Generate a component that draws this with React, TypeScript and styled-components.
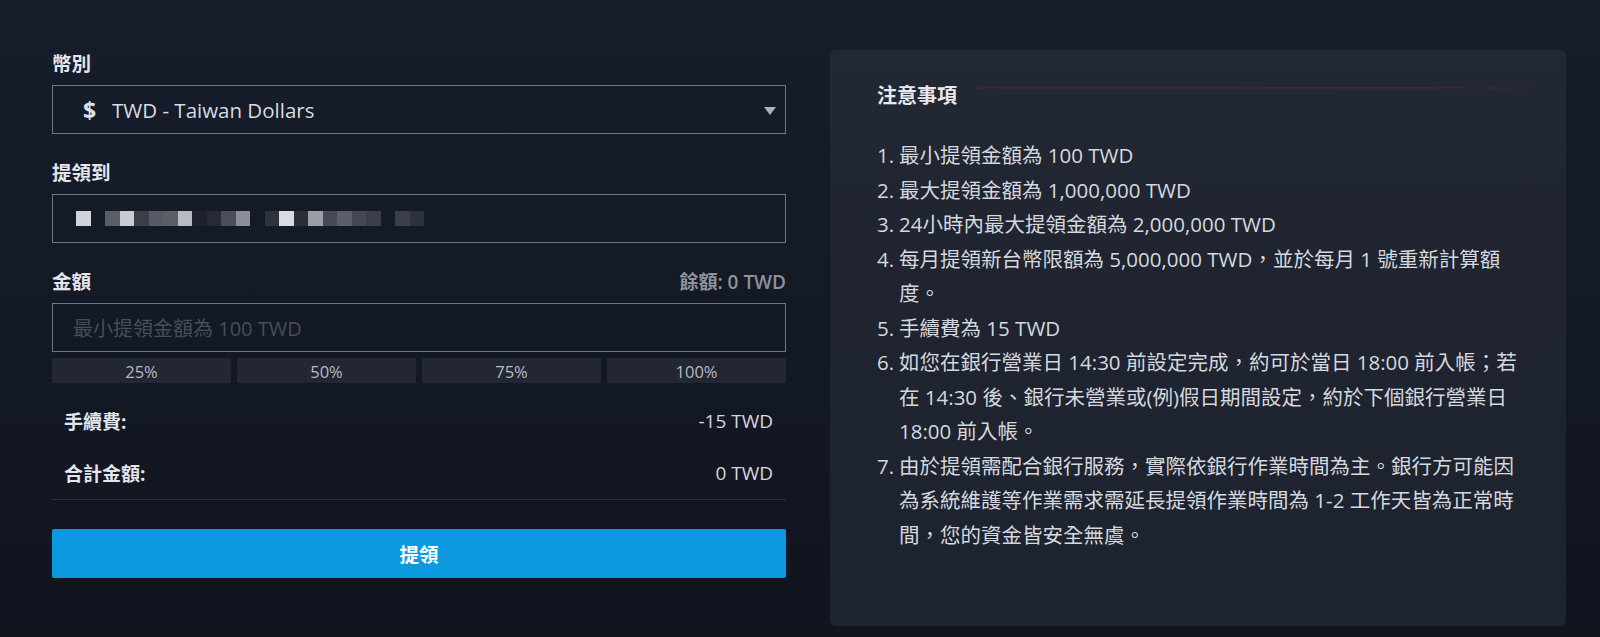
import React from "react";
import styled, { createGlobalStyle } from "styled-components";

const GlobalStyle = createGlobalStyle`
  html, body {
    margin: 0;
    padding: 0;
  }
  body {
    background: linear-gradient(180deg, #171d2a 0%, #131825 60%, #0f141d 100%);
    font-family: "Open Sans", "Noto Sans CJK TC", sans-serif;
    color: #d8dbe0;
  }
`;

const notes: string[][] = [
  ["最小提領金額為 100 TWD"],
  ["最大提領金額為 1,000,000 TWD"],
  ["24小時內最大提領金額為 2,000,000 TWD"],
  ["每月提領新台幣限額為 5,000,000 TWD，並於每月 1 號重新計算額", "度。"],
  ["手續費為 15 TWD"],
  [
    "如您在銀行營業日 14:30 前設定完成，約可於當日 18:00 前入帳；若",
    "在 14:30 後、銀行未營業或(例)假日期間設定，約於下個銀行營業日",
    "18:00 前入帳。",
  ],
  [
    "由於提領需配合銀行服務，實際依銀行作業時間為主。銀行方可能因",
    "為系統維護等作業需求需延長提領作業時間為 1-2 工作天皆為正常時",
    "間，您的資金皆安全無虞。",
  ],
];

// blurred account number, one shade per mosaic cell
const mosaic = [
  "#d0d3da", "", "#5a5e68", "#c8cbd2", "#3a3e48", "#555a64", "#5a5f68", "#b8bcc2",
  "#1e222c", "#262a34", "#4a4e58", "#8a8e96", "", "#2e323c", "#d8dbe0", "#2a2e38",
  "#9a9ea6", "#464a54", "#5a5e68", "#444852", "#3a3e48", "", "#3a3e48", "#2e323c",
];

const App = () => {
  return (
    <>
      <GlobalStyle />
      <Page>
        <Form>
          <Label>幣別</Label>
          <Field>
            <Dollar>$</Dollar>
            <SelectText>TWD - Taiwan Dollars</SelectText>
            <Caret />
          </Field>

          <Label>提領到</Label>
          <Field>
            <Mosaic>
              {mosaic.map((shade, i) => (
                <Cell key={i} $shade={shade} />
              ))}
            </Mosaic>
          </Field>

          <LabelRow>
            <Label>金額</Label>
            <Balance>餘額: 0 TWD</Balance>
          </LabelRow>
          <Field>
            <Placeholder>最小提領金額為 100 TWD</Placeholder>
          </Field>
          <Percents>
            {["25%", "50%", "75%", "100%"].map((p) => (
              <PercentButton key={p}>{p}</PercentButton>
            ))}
          </Percents>

          <Summary>
            <SummaryRow>
              <SummaryLabel>手續費:</SummaryLabel>
              <SummaryValue>-15 TWD</SummaryValue>
            </SummaryRow>
            <SummaryRow $last>
              <SummaryLabel>合計金額:</SummaryLabel>
              <SummaryValue>0 TWD</SummaryValue>
            </SummaryRow>
          </Summary>

          <Submit>提領</Submit>
        </Form>

        <Notice>
          <NoticeHead>
            <NoticeTitle>注意事項</NoticeTitle>
            <HeadLine />
          </NoticeHead>
          <NoteList>
            {notes.map((lines, i) => (
              <NoteItem key={i}>
                <NoteNum>{i + 1}.</NoteNum>
                <NoteText>
                  {lines.map((line) => (
                    <NoteLine key={line}>{line}</NoteLine>
                  ))}
                </NoteText>
              </NoteItem>
            ))}
          </NoteList>
        </Notice>
      </Page>
    </>
  );
};

const Page = styled.div`
  display: grid;
  grid-template-columns: 734px 736px;
  column-gap: 44px;
  align-items: start;
  padding: 50px 34px 11px 52px;
  height: 637px;
  box-sizing: border-box;
`;

const Form = styled.div`
  display: flex;
  flex-direction: column;
`;

const Label = styled.div`
  font-size: 19.5px;
  font-weight: 700;
  line-height: 28px;
  color: #e4e6ea;
  margin-bottom: 7px;
`;

const LabelRow = styled.div`
  display: flex;
  justify-content: space-between;
  align-items: flex-start;
  margin-top: 25px;
`;

const Balance = styled.div`
  font-size: 19px;
  font-weight: 600;
  line-height: 28px;
  color: #8d929b;
`;

const Field = styled.div`
  display: flex;
  align-items: center;
  height: 49px;
  box-sizing: border-box;
  border: 1px solid #6f7581;
  padding: 0 9px 0 22px;

  & + ${Label} {
    margin-top: 25px;
  }
`;

const Dollar = styled.span`
  font-family: "Open Sans", sans-serif;
  font-size: 23px;
  font-weight: 700;
  color: #dfe2e7;
  width: 37px;
  padding-left: 8px;
  box-sizing: border-box;
`;

const SelectText = styled.span`
  flex: 1;
  font-size: 20.5px;
  color: #d8dbe0;
`;

const Caret = styled.span`
  width: 0;
  height: 0;
  border-left: 6px solid transparent;
  border-right: 6px solid transparent;
  border-top: 8px solid #aeb3bc;
  margin-top: 2px;
`;

const Mosaic = styled.div`
  display: flex;
  margin-left: 1px;
`;

const Cell = styled.span<{ $shade: string }>`
  width: 14.5px;
  height: 15px;
  background: ${(p) => p.$shade || "transparent"};
`;

const Placeholder = styled.span`
  font-size: 20px;
  color: #474d59;
  margin-left: -2px;
`;

const Percents = styled.div`
  display: grid;
  grid-template-columns: repeat(4, 1fr);
  gap: 6px;
  margin-top: 6px;
`;

const PercentButton = styled.div`
  height: 25px;
  background: #222733;
  color: #b6bac2;
  font-size: 16.5px;
  line-height: 27px;
  text-align: center;
`;

const Summary = styled.div`
  display: flex;
  flex-direction: column;
  margin-top: 12px;
`;

const SummaryRow = styled.div<{ $last?: boolean }>`
  display: flex;
  justify-content: space-between;
  align-items: center;
  height: 52px;
  padding: 0 13px 0 12px;
  border-bottom: ${(p) => (p.$last ? "1px solid #2c323e" : "none")};
`;

const SummaryLabel = styled.span`
  font-size: 19px;
  font-weight: 700;
  color: #e3e5e9;
`;

const SummaryValue = styled.span`
  font-size: 19px;
  color: #d5d8de;
`;

const Submit = styled.button`
  margin-top: 29px;
  height: 49px;
  border: none;
  border-radius: 2px;
  background: #0b9ae0;
  color: #ffffff;
  font-family: "Open Sans", "Noto Sans CJK TC", sans-serif;
  font-size: 19.5px;
  font-weight: 700;
  cursor: pointer;
`;

const Notice = styled.div`
  height: 576px;
  box-sizing: border-box;
  background: linear-gradient(180deg, #222834 0%, #1f2430 40%, #1e2330 100%);
  border-radius: 6px;
  padding: 32px 33px 0 47px;
`;

const NoticeHead = styled.div`
  display: flex;
  align-items: flex-start;
  gap: 21px;
`;

const NoticeTitle = styled.div`
  font-size: 20px;
  font-weight: 700;
  line-height: 28px;
  color: #e6e8ec;
`;

const HeadLine = styled.div`
  flex: 1;
  height: 2px;
  margin-top: 5px;
  background: linear-gradient(90deg, #3a2734 0%, #3b2836 80%, rgba(59, 40, 54, 0.4) 100%);
`;

const NoteList = styled.ol`
  list-style: none;
  margin: 28px 0 0;
  padding: 0;
`;

const NoteItem = styled.li`
  display: flex;
  font-size: 20.5px;
  line-height: 34.5px;
  color: #d5d8de;
`;

const NoteNum = styled.span`
  width: 22px;
  flex-shrink: 0;
`;

const NoteText = styled.div`
  display: flex;
  flex-direction: column;
`;

const NoteLine = styled.span`
  white-space: nowrap;
`;

export default App;
